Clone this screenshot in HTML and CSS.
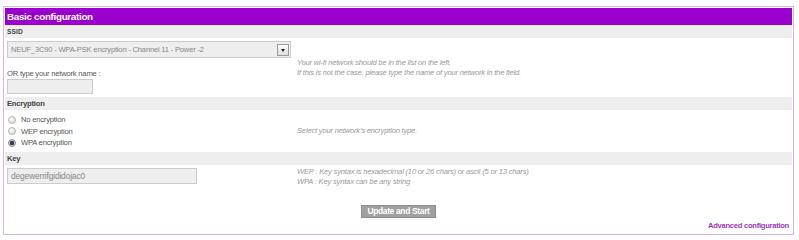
FILE: index.html
```html
<!DOCTYPE html>
<html lang="en">
<head>
    <meta charset="UTF-8">
    <title>Basic configuration</title>
    <link rel="stylesheet" href="styles.css">
</head>
<body>

    <div class="panel">
        <div class="title">Basic configuration</div>

        <div class="bar bar-caps">SSID</div>
        <div class="field">
            <div class="left">
                <div class="select-wrap">
                    <select class="select">
                        <option>NEUF_3C90 - WPA-PSK encryption - Channel 11 - Power -2</option>
                    </select>
                    <span class="drop"></span>
                </div>
                <label class="small" for="netname">OR type your network name :</label>
                <input class="text text-short" id="netname" type="text">
            </div>
            <div class="hint">
                Your wi-fi network should be in the list on the left.<br>
                If this is not the case, please type the name of your network in the field.
            </div>
        </div>

        <div class="bar">Encryption</div>
        <div class="field field-radios">
            <div class="left">
                <label class="radio"><input type="radio" name="enc"> No encryption</label>
                <label class="radio"><input type="radio" name="enc"> WEP encryption</label>
                <label class="radio"><input type="radio" name="enc" checked> WPA encryption</label>
            </div>
            <div class="hint">Select your network's encryption type.</div>
        </div>

        <div class="bar">Key</div>
        <div class="field field-key">
            <div class="left">
                <input class="text text-key" type="text" value="degewerrifgididojac0">
            </div>
            <div class="hint">
                WEP : Key syntax is hexadecimal (10 or 26 chars) or ascii (5 or 13 chars)<br>
                WPA : Key syntax can be any string
            </div>
        </div>

        <div class="footer">
            <button class="btn">Update and Start</button>
            <a class="advanced" href="#">Advanced configuration</a>
        </div>
    </div>

</body>
</html>
```

FILE: styles.css
```css
body {
    margin: 0;
    background-color: #fff;
    font-family: "Liberation Sans", Arial, sans-serif;
}

.panel {
    margin: 6px 5px 0 3px;
    border: 1px solid #d9b6e4;
    padding: 1px;
}

.title {
    height: 17px;
    line-height: 17px;
    padding-left: 2px;
    background-color: #9900cc;
    color: #fff;
    font-size: 9.8px;
    font-weight: bold;
    letter-spacing: -0.3px;
}

.bar {
    height: 13px;
    line-height: 13px;
    padding-left: 2px;
    background-color: #eeeeee;
    color: #444;
    font-size: 7.6px;
    font-weight: bold;
    letter-spacing: -0.2px;
}

.bar-caps {
    font-size: 6.6px;
    letter-spacing: 0.1px;
}

.field {
    display: grid;
    grid-template-columns: 284px 1fr;
    column-gap: 6px;
    align-items: center;
    padding: 3px 2px;
    font-size: 7.6px;
    letter-spacing: -0.2px;
}

.left {
    display: flex;
    flex-direction: column;
    align-items: flex-start;
}

.select-wrap {
    position: relative;
    width: 284px;
    height: 17px;
}

.select {
    appearance: none;
    -webkit-appearance: none;
    width: 100%;
    height: 100%;
    margin: 0;
    padding: 0 0 0 3px;
    border: 1px solid #cccccc;
    border-radius: 0;
    background-color: #eeeeee;
    color: #888;
    font-family: inherit;
    font-size: 7.6px;
    letter-spacing: -0.2px;
}

/* petit bouton de la liste */
.drop {
    position: absolute;
    right: 2px;
    top: 3px;
    width: 10px;
    height: 10px;
    border: 1px solid #9a9a9a;
    background: linear-gradient(#ffffff, #dcdcdc);
    pointer-events: none;
}

.drop::after {
    content: "";
    position: absolute;
    left: 3px;
    top: 4px;
    border-left: 2px solid transparent;
    border-right: 2px solid transparent;
    border-top: 3px solid #222;
}

.small {
    margin-top: 11px;
    line-height: 10px;
    color: #555;
}

.text {
    box-sizing: border-box;
    margin: 0;
    padding: 0 0 0 3px;
    border: 1px solid #cccccc;
    background-color: #eeeeee;
    color: #888;
    font-family: inherit;
    letter-spacing: -0.2px;
}

.text-short {
    width: 86px;
    height: 15px;
}

.text-key {
    width: 190px;
    height: 16px;
    font-size: 8.5px;
}

.hint {
    color: #999;
    font-style: italic;
    line-height: 10px;
}

.field-radios {
    padding: 4px 2px 3px;
}

.radio {
    display: flex;
    align-items: center;
    height: 11.5px;
    color: #555;
}

.radio input {
    appearance: none;
    -webkit-appearance: none;
    width: 8px;
    height: 8px;
    margin: 0 5px 0 1px;
    border: 1px solid #b4b4b4;
    border-radius: 50%;
    background: radial-gradient(circle at 40% 35%, #ffffff, #d0d0d0);
}

.radio input:checked {
    border-color: #8a8a8a;
    background: radial-gradient(circle, #2f3d5c 0, #2f3d5c 2px, #c8c8c8 2.5px, #e8e8e8 4px);
}

.field-key {
    align-items: start;
    padding: 2px 2px 0;
}

.field-key .left {
    padding-top: 1px;
}

.footer {
    display: flex;
    flex-direction: column;
    align-items: center;
    padding-bottom: 1px;
}

.btn {
    width: 75px;
    height: 13px;
    margin-top: 18px;
    padding: 0;
    border: 1px solid #8e8e8e;
    background-color: #a0a0a0;
    color: #fff;
    font-family: inherit;
    font-size: 8.4px;
    font-weight: bold;
    letter-spacing: -0.3px;
    line-height: 11px;
    white-space: nowrap;
    cursor: pointer;
}

.advanced {
    align-self: flex-end;
    margin-top: 2px;
    padding-right: 3px;
    line-height: 12px;
    color: #9b38b8;
    font-size: 7.6px;
    font-weight: bold;
    letter-spacing: -0.27px;
    text-decoration: none;
}
```
